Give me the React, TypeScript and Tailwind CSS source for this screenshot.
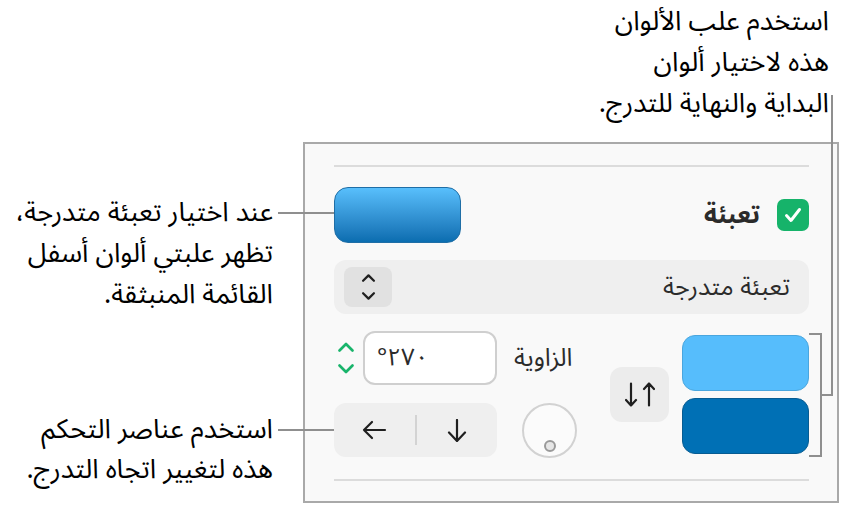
const arabic = "font-['Noto_Sans_Arabic','DejaVu_Sans','Noto_Sans',sans-serif]"

function Chevrons({ className }: { className: string }) {
  return (
    <svg width="18" height="36" viewBox="0 0 18 36" fill="none" className={className}>
      <path d="M2.5 10.5 9 4l6.5 6.5" stroke="currentColor" strokeWidth="2.7" strokeLinecap="round" strokeLinejoin="round" />
      <path d="M2.5 25.5 9 32l6.5-6.5" stroke="currentColor" strokeWidth="2.7" strokeLinecap="round" strokeLinejoin="round" />
    </svg>
  )
}

export default function App() {
  return (
    <div className={`relative h-[527px] w-[841px] overflow-hidden bg-white text-black ${arabic}`}>
      {/* callout: colour wells */}
      <div dir="rtl" className="h-[123px] pt-[1px] pr-[12px] text-[27px] leading-[41px]">
        <p>استخدم علب الألوان</p>
        <p>هذه لاختيار ألوان</p>
        <p>البداية والنهاية للتدرج.</p>
      </div>

      <div className="mt-[19px] flex items-start">
        {/* left callouts */}
        <div className="w-[303px] pr-[30px] text-[27px] leading-[41px]">
          <div dir="rtl" className="mt-[50px]">
            <p>عند اختيار تعبئة متدرجة،</p>
            <p>تظهر علبتي ألوان أسفل</p>
            <p>القائمة المنبثقة.</p>
          </div>
          <div dir="rtl" className="mt-[95px] leading-[40px]">
            <p>استخدم عناصر التحكم</p>
            <p>هذه لتغيير اتجاه التدرج.</p>
          </div>
        </div>

        {/* inspector panel */}
        <div className="flex h-[361px] w-[536px] flex-col border-2 border-[#a9a9a9] bg-[#f9f9f9] pr-[28px] pl-[29px] pt-[21px] text-[#2b2b2b]">
          <div className="h-[2px] bg-[#dcdcdc]" />

          <div className="mt-[20px] flex h-[56px] items-center justify-between">
            <div className="h-[56px] w-[127px] rounded-[14px] border border-[#1f6ea6] bg-gradient-to-b from-[#58bffc] to-[#0a6db0]" />
            <div className="flex items-center gap-[17px]">
              <span dir="rtl" className="text-[25px] leading-none font-bold">تعبئة</span>
              <div className="flex h-[32px] w-[32px] items-center justify-center rounded-[7px] bg-[#16b36a]">
                <svg width="22" height="22" viewBox="0 0 22 22" fill="none">
                  <path d="M4.5 11.5 9 16.5 17.5 5.5" stroke="white" strokeWidth="3" strokeLinecap="round" strokeLinejoin="round" />
                </svg>
              </div>
            </div>
          </div>

          <div className="mt-[17px] flex h-[54px] items-center justify-between rounded-[12px] bg-[#efefef] pr-[19px] pl-[10px]">
            <div className="flex h-[40px] w-[48px] items-center justify-center rounded-[8px] bg-[#e1e1e1]">
              <Chevrons className="h-[30px] w-[15px] text-[#1f1f1f]" />
            </div>
            <span dir="rtl" className="text-[25px] leading-none">تعبئة متدرجة</span>
          </div>

          <div className="mt-[17px] flex h-[126px] items-center">
            <div className="flex w-[243px] flex-col gap-[18px]">
              <div className="flex h-[54px] items-center">
                <Chevrons className="ml-[3px] h-[36px] w-[18px] text-[#19b46b]" />
                <div className="ml-[8px] flex h-[54px] w-[134px] items-center rounded-[12px] border-2 border-[#cfcfcf] bg-white pl-[12px] text-[24px] leading-none">
                  <span dir="ltr">°٢٧٠</span>
                </div>
                <span dir="rtl" className="ml-[17px] text-[25px] leading-none">الزاوية</span>
              </div>
              <div className="flex h-[54px] items-center">
                <div className="flex h-[54px] w-[163px] items-center rounded-[12px] bg-[#efefef]">
                  <div className="flex flex-1 justify-center">
                    <svg width="25" height="20" viewBox="0 0 25 20" fill="none">
                      <path d="M23 10H2M10 2 2 10l8 8" stroke="#1f1f1f" strokeWidth="2.2" strokeLinecap="round" strokeLinejoin="round" />
                    </svg>
                  </div>
                  <div className="h-[30px] w-[2px] bg-[#d3d3d3]" />
                  <div className="flex flex-1 justify-center">
                    <svg width="20" height="23" viewBox="0 0 20 23" fill="none">
                      <path d="M10 1v21M2 13.5l8 8.5 8-8.5" stroke="#1f1f1f" strokeWidth="2.2" strokeLinecap="round" strokeLinejoin="round" />
                    </svg>
                  </div>
                </div>
                <div className="relative ml-[25px] h-[55px] w-[55px] rounded-full border-2 border-[#d2d2d2] bg-[#fbfbfb]">
                  <div className="absolute bottom-[4px] left-1/2 h-[12px] w-[12px] -translate-x-1/2 rounded-full border-2 border-[#9a9a9a] bg-[#e6e6e6]" />
                </div>
              </div>
            </div>

            <div className="ml-[33px] flex h-[55px] w-[59px] items-center justify-center rounded-[12px] bg-[#ececec]">
              <svg width="30" height="25" viewBox="0 0 30 25" fill="none">
                <path d="M6 1.5v22M1 18l5 5.5 5-5.5M24 23.5v-22M19 7l5-5.5L29 7" stroke="#1f1f1f" strokeWidth="2.2" strokeLinecap="round" strokeLinejoin="round" />
              </svg>
            </div>

            <div className="ml-[13px] flex w-[127px] flex-col gap-[7px]">
              <div className="h-[56px] rounded-[13px] border border-[#4aa6de] bg-[#56bdfc]" />
              <div className="h-[56px] rounded-[13px] border border-[#075c92] bg-[#0070b5]" />
            </div>
          </div>

          <div className="mt-[22px] h-[2px] bg-[#dcdcdc]" />
        </div>
      </div>

      {/* callout lines */}
      <div className="absolute top-[212px] left-[278px] z-10 h-[2px] w-[56px] bg-[#8f8f8f]" />
      <div className="absolute top-[429px] left-[278px] z-10 h-[2px] w-[56px] bg-[#8f8f8f]" />
      <div className="absolute top-[95px] left-[831px] z-10 h-[301px] w-[2px] bg-[#8f8f8f]" />
      <div className="absolute top-[394px] left-[820px] z-10 h-[2px] w-[13px] bg-[#8f8f8f]" />
      <div className="absolute top-[333px] left-[809px] z-10 h-[124px] w-[13px] border-2 border-l-0 border-[#8f8f8f]" />
    </div>
  )
}
